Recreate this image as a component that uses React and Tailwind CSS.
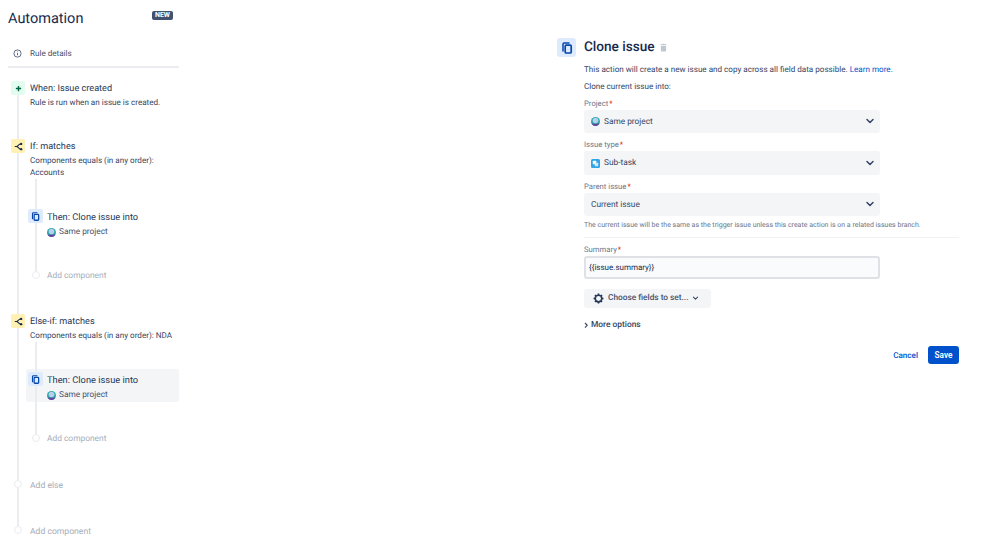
const FONT = "font-['Roboto','Noto_Sans',sans-serif] [text-rendering:geometricPrecision]";

function CopyIcon({ size = 9, color = "#0747a6" }) {
  return (
    <svg width={size} height={size} viewBox="0 0 12 12" fill="none">
      <path d="M2 9V2.2C2 1.5 2.5 1 3.2 1H8" stroke={color} strokeWidth="1.5" strokeLinecap="round" />
      <rect x="4.2" y="3.2" width="6" height="7.8" rx="1" stroke={color} strokeWidth="1.7" />
    </svg>
  );
}

function BranchIcon() {
  return (
    <svg width="9" height="9" viewBox="0 0 12 12" fill="none" stroke="#172b4d" strokeWidth="1.4">
      <path d="M1 6h3l4-3.5M4 6l4 3.5" />
      <circle cx="9.5" cy="2.5" r="1.6" fill="#172b4d" stroke="none" />
      <circle cx="9.5" cy="9.5" r="1.6" fill="#172b4d" stroke="none" />
    </svg>
  );
}

function ProjectIcon() {
  return (
    <svg width="9" height="9" viewBox="0 0 10 10" className="shrink-0">
      <circle cx="5" cy="5" r="5" fill="#2aa9a6" />
      <circle cx="5" cy="4" r="3.1" fill="#b9cdf0" />
      <path d="M0.6 7C1.5 9 3 10 5 10s3.5-1 4.4-3C8 7.8 2 7.8 0.6 7z" fill="#6b3fa0" />
    </svg>
  );
}

function Chevron({ w = 10, h = 7 }) {
  return (
    <svg width={w} height={h} viewBox="0 0 10 7" fill="none" stroke="#344563" strokeWidth="1.5" strokeLinecap="round" strokeLinejoin="round">
      <path d="M2 1.5 5 4.5 8 1.5" />
    </svg>
  );
}

function Dot() {
  return <div className="w-[8px] h-[8px] rounded-full border border-[#ebecf0] bg-white shrink-0" />;
}

function OuterAdd({ label, height, line }) {
  return (
    <div className={`flex ${height}`}>
      <div className="w-[14px] flex flex-col items-center shrink-0">
        <Dot />
        {line && <div className="w-[2px] flex-1 bg-[#ebecf0]" />}
      </div>
      <span className="ml-[5px] pt-[1px] text-[8.6px] leading-[10px] text-[#a5adba]">{label}</span>
    </div>
  );
}

function ThenCard({ active }) {
  return (
    <div className={`ml-[-4px] w-[153px] h-[33px] rounded-[2px] flex pl-[2px] ${active ? "bg-[#f4f5f7]" : ""}`}>
      <div className="w-[15px] flex flex-col items-center shrink-0">
        <div className="w-[2px] h-[3px] bg-[#ebecf0]" />
        <div className="w-[15px] h-[14px] rounded-[2px] bg-[#deebff] flex items-center justify-center shrink-0">
          <CopyIcon size={9} />
        </div>
        <div className="w-[2px] flex-1 bg-[#ebecf0]" />
      </div>
      <div className="ml-[4px] pt-[4px]">
        <div className="text-[9.3px] leading-[15px] text-[#253858] whitespace-nowrap">Then: Clone issue into</div>
        <div className="flex items-center gap-[3px] h-[14px] pt-[1px] text-[8.3px] text-[#42526e]">
          <ProjectIcon />
          <span>Same project</span>
        </div>
      </div>
    </div>
  );
}

function Nested({ active }) {
  return (
    <div className="flex flex-col">
      <div className="w-[2px] ml-[5px] mt-[1px] h-[27px] bg-[#ebecf0]" />
      <ThenCard active={active} />
      <div className="w-[2px] ml-[5px] h-[32px] bg-[#ebecf0]" />
      <div className="flex h-[13px] ml-[-2px]">
        <div className="w-[15px] flex justify-center shrink-0"><Dot /></div>
        <span className="ml-[4px] text-[8.4px] leading-[10px] text-[#a5adba]">Add component</span>
      </div>
    </div>
  );
}

function Step({ iconBg, icon, title, desc, height, children }) {
  return (
    <div className={`flex ${height}`}>
      <div className="w-[14px] flex flex-col items-center shrink-0">
        <div className={`w-[14px] h-[14px] rounded-[2px] flex items-center justify-center shrink-0 ${iconBg}`}>{icon}</div>
        <div className="w-[2px] flex-1 bg-[#ebecf0]" />
      </div>
      <div className="ml-[5px] flex-1 min-w-0">
        <div className="text-[9.15px] leading-[13px] pt-[2px] text-[#253858] whitespace-nowrap">{title}</div>
        <div className="text-[8.1px] leading-[12px] text-[#344563] whitespace-nowrap">{desc}</div>
        {children}
      </div>
    </div>
  );
}

function Label({ children }) {
  return (
    <div className="mt-[7px] text-[7.7px] leading-[10px] text-[#6b778c]">
      {children}
      <span className="text-[#de350b] ml-[1px]">*</span>
    </div>
  );
}

function SelectBox({ icon, h, children }) {
  return (
    <div className={`w-[296px] ${h} mt-[1px] rounded-[3px] bg-[#f4f5f7] flex items-center pl-[7px] pr-[5px]`}>
      {icon}
      <span className={`text-[8.3px] pt-[1px] text-[#344563] ${icon ? "ml-[4px]" : ""}`}>{children}</span>
      <span className="ml-auto flex"><Chevron /></span>
    </div>
  );
}

export default function App() {
  return (
    <div className={`w-[999px] h-[546px] bg-white flex overflow-hidden ${FONT}`}>
      <aside className="w-[171px] ml-[8px] shrink-0">
        <div className="flex items-center justify-between h-[19px] mt-[8px] pr-[6px]">
          <h1 className="text-[14.5px] leading-[19px] pt-[1px] font-normal text-[#172b4d]">Automation</h1>
          <span className="h-[9px] px-[3px] mb-[5px] rounded-[2px] bg-[#42526e] text-white text-[7px] leading-[9px] font-bold">NEW</span>
        </div>
        <div className="h-[41px] border-b-2 border-[#ebecf0] flex items-center pl-[5px] pt-[14px] gap-[8px] text-[8.1px] text-[#42526e]">
          <svg width="9" height="9" viewBox="0 0 10 10" fill="none" stroke="#505f79" strokeWidth="1">
            <circle cx="5" cy="5" r="4" />
            <path d="M5 4.5v2.5M5 2.8v.8" />
          </svg>
          <span>Rule details</span>
        </div>
        <div className="pl-[3px] pt-[13px]">
          <Step
            height="h-[58px]"
            iconBg="bg-[#e3fcef]"
            icon={<svg width="7" height="7" viewBox="0 0 8 8" stroke="#006644" strokeWidth="1.6"><path d="M4 1v6M1 4h6" /></svg>}
            title="When: Issue created"
            desc="Rule is run when an issue is created."
          />
          <Step
            height="h-[175px]"
            iconBg="bg-[#fff0b3]"
            icon={<BranchIcon />}
            title="If: matches"
            desc={<>Components equals (in any order):<br />Accounts</>}
          >
            <Nested />
          </Step>
          <Step
            height="h-[166px]"
            iconBg="bg-[#fff0b3]"
            icon={<BranchIcon />}
            title="Else-if: matches"
            desc="Components equals (in any order): NDA"
          >
            <Nested active />
          </Step>
          <OuterAdd label="Add else" height="h-[46px]" line />
          <OuterAdd label="Add component" height="h-[14px]" />
        </div>
      </aside>

      <main className="ml-[378px] w-[402px] shrink-0 pt-[38px]">
        <div className="flex items-center h-[19px]">
          <div className="w-[19px] h-[19px] rounded-[3px] bg-[#deebff] flex items-center justify-center shrink-0">
            <CopyIcon size={12} />
          </div>
          <h2 className="ml-[8px] text-[13.6px] font-medium leading-[19px] text-[#172b4d]">Clone issue</h2>
          <svg className="ml-[5px]" width="7" height="9" viewBox="0 0 8 9" fill="#c1c7d0">
            <path d="M1 2.4h6v5.8a.8.8 0 0 1-.8.8H1.8a.8.8 0 0 1-.8-.8zM.5.8h2L3 .2h2l.5.6h2v.9h-7z" />
          </svg>
        </div>
        <div className="pl-[27px]">
          <p className="mt-[6px] text-[8.1px] leading-[12px] text-[#344563] whitespace-nowrap">
            This action will create a new issue and copy across all field data possible. <span className="text-[#0052cc]">Learn more.</span>
          </p>
          <p className="mt-[5px] text-[8.1px] leading-[12px] text-[#344563]">Clone current issue into:</p>
          <Label>Project</Label>
          <SelectBox h="h-[23px]" icon={<ProjectIcon />}>Same project</SelectBox>
          <Label>Issue type</Label>
          <SelectBox h="h-[24px]" icon={
            <svg width="9" height="9" viewBox="0 0 9 9" className="shrink-0">
              <rect width="9" height="9" rx="1.5" fill="#2fa4e7" />
              <rect x="1.8" y="1.8" width="3.4" height="3.4" rx=".5" fill="#fff" />
              <rect x="3.8" y="3.8" width="3.4" height="3.4" rx=".5" fill="#cfeafb" />
            </svg>
          }>Sub-task</SelectBox>
          <Label>Parent issue</Label>
          <SelectBox h="h-[23px]">Current issue</SelectBox>
          <p className="mt-[4px] text-[7px] leading-[10px] text-[#6b778c] whitespace-nowrap">
            The current issue will be the same as the trigger issue unless this create action is on a related issues branch.
          </p>
          <div className="mt-[7px] h-px w-[375px] bg-[#f1f2f4]" />
          <Label>Summary</Label>
          <div className="w-[296px] h-[23px] mt-[1px] rounded-[3px] bg-[#fafbfc] border-2 border-[#dfe1e6] flex items-center pl-[3px] pt-[1px] text-[8px] text-[#172b4d]">
            {"{{issue.summary}}"}
          </div>
          <div className="mt-[10px] w-[127px] h-[19px] rounded-[3px] bg-[#f4f5f7] flex items-center pl-[9px] text-[8.3px] font-medium text-[#42526e]">
            <svg width="11" height="11" viewBox="0 0 12 12" fill="none" stroke="#253858" strokeWidth="1.8">
              <circle cx="6" cy="6" r="3.6" />
              <path d="M6 .6v1.6M6 9.8v1.6M.6 6h1.6M9.8 6h1.6M2.2 2.2l1.1 1.1M8.7 8.7l1.1 1.1M2.2 9.8l1.1-1.1M8.7 3.3l1.1-1.1" />
            </svg>
            <span className="ml-[4px]">Choose fields to set...</span>
            <span className="ml-[4px] flex"><Chevron w={7} h={5} /></span>
          </div>
          <div className="mt-[11px] h-[12px] flex items-center text-[8.4px] font-medium text-[#344563]">
            <svg width="5" height="7" viewBox="0 0 5 7" fill="none" stroke="#344563" strokeWidth="1.1"><path d="M1 1l2.2 2.3L1 5.6" /></svg>
            <span className="ml-[2px]">More options</span>
          </div>
          <div className="mt-[15px] w-[375px] flex items-center justify-end gap-[10px]">
            <span className="text-[8.1px] font-medium text-[#0052cc]">Cancel</span>
            <button className="w-[31px] h-[18px] rounded-[3px] bg-[#0052cc] text-white text-[8.3px] font-semibold">Save</button>
          </div>
        </div>
      </main>
    </div>
  );
}
